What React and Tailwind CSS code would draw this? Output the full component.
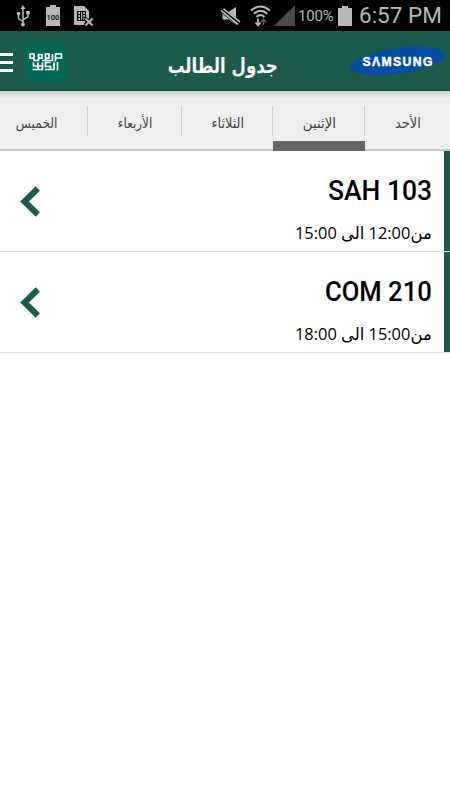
const days = [
  { label: 'الأحد', box: 'w-[85px]', text: 'scale-x-[0.93]' },
  { label: 'الإثنين', box: 'w-[92px]', text: 'scale-x-[0.95]', active: true },
  { label: 'الثلاثاء', box: 'w-[91px]', text: 'scale-x-[0.92]' },
  { label: 'الأربعاء', box: 'w-[94px]', text: 'scale-x-[0.86]' },
  { label: 'الخميس', box: 'w-[102px]', text: 'scale-x-[0.88]' },
]

const courses = [
  { code: 'SAH 103', from: '12:00', to: '15:00', fit: 'scale-x-[0.945]' },
  { code: 'COM 210', from: '15:00', to: '18:00', fit: 'scale-x-[0.915]' },
]

function StatusBar() {
  return (
    <div className="flex h-[31px] shrink-0 items-center bg-black text-[#b8b8b8]">
      <svg className="ml-[16px]" width="15" height="22" viewBox="0 0 15 22" fill="none" stroke="currentColor" strokeWidth="1.5">
        <path d="M7 3v16M2.5 9v4.5L7 16.5M12 8v3.5L7 15" />
        <path d="M7 0l2.6 4H4.4z" fill="currentColor" stroke="none" />
        <circle cx="7" cy="19.4" r="2" fill="currentColor" stroke="none" />
        <circle cx="2.5" cy="8.5" r="1.8" fill="currentColor" stroke="none" />
        <path d="M10.3 6h3.4v3.4h-3.4z" fill="currentColor" stroke="none" />
      </svg>
      <svg className="ml-[15px]" width="14" height="21" viewBox="0 0 14 21">
        <path d="M0 2h4V0h6v2h4v19H0z" fill="currentColor" />
        <text x="7" y="14.5" textAnchor="middle" fontSize="7.5" fontWeight="500" fill="#000" fontFamily="Roboto, sans-serif">100</text>
      </svg>
      <svg className="ml-[14px]" width="20" height="22" viewBox="0 0 20 22">
        <path d="M0 1h10l5 5v14H0z" fill="currentColor" />
        <path d="M3.5 6.5h8v9h-8zM3.5 9.5h3M3.5 12.5h3M11.5 9.5h-3M11.5 12.5h-3M6.5 6.5v9M8.7 6.5v9" fill="none" stroke="#000" strokeWidth="1.1" />
        <path d="M11 13.5l7 7M18 13.5l-7 7" stroke="#000" strokeWidth="4" />
        <path d="M11.5 13.5l7 7M18.5 13.5l-7 7" stroke="currentColor" strokeWidth="1.9" />
      </svg>
      {/* muted speaker: two slashes cut through the cone */}
      <svg className="ml-[127px]" width="20" height="20" viewBox="0 0 20 20">
        <path d="M1.5 6h6l7.500-5v17.500l-7.500-5h-6z" fill="currentColor" />
        <path d="M1 4l17 13.500" stroke="#000" strokeWidth="5" />
        <path d="M2.500 2.800l16.500 13M0 4.500l17 14" stroke="currentColor" strokeWidth="1.700" />
      </svg>
      <svg className="ml-[9px]" width="21" height="22" viewBox="0 0 21 22" fill="none" stroke="currentColor" strokeWidth="2">
        <path d="M1 5.5Q10.5 -2.5 20 5.5M3.800 8.800Q10.5 2.800 17.200 8.800M6.500 12Q10.5 8 14.500 12" />
        <path d="M8 13.500v6M5.500 17.500L8 20.500l2.500-3" strokeWidth="1.700" />
        <path d="M13.500 20v-5M11 17l2.500-3 2.500 3" stroke="#555" strokeWidth="1.700" />
      </svg>
      <svg className="ml-[3px]" width="21" height="21" viewBox="0 0 21 21">
        <path d="M21 0v21H0z" fill="#4b4b4b" />
      </svg>
      <span className="ml-[3px] w-[36px] whitespace-nowrap pt-px font-[Roboto,sans-serif] text-[15px] tracking-[-0.2px]">100%</span>
      <svg className="ml-[4px]" width="14" height="20" viewBox="0 0 14 20">
        <path d="M0 2h4V0h6v2h4v18H0z" fill="currentColor" />
      </svg>
      <span className="ml-[7px] whitespace-nowrap font-[Roboto,sans-serif] text-[22.500px]">6:57 PM</span>
    </div>
  )
}

function Emblem() {
  return (
    <svg className="ml-[12px]" width="40" height="40" viewBox="0 0 40 40">
      <path d="M0 0h40v40H0z" fill="#006854" />
      <path
        d="M9 16.200H5V12H9V18.500H13.500V12.500H17V16.200H13.500M17 18.500H24M20.500 18.500V12H24V16.200H20.500M24 18.500H27.500V12M30.500 19.500V12H36.500V16H30.500M8.500 20.500V24H13V27.500H7.500M13 20.500V24H17.500V20.500M17.500 24V27.500H13M25.500 20.500H20.500V24.500H25.500V27.500H20M25.500 27.500H29V20.500M32.500 20V28.500"
        fill="none"
        stroke="#fff"
        strokeWidth="1.700"
      />
    </svg>
  )
}

function SamsungLogo() {
  return (
    <svg width="94" height="32" viewBox="0 0 94 32">
      <ellipse cx="47" cy="16" rx="47.300" ry="12.700" fill="#034ea2" transform="rotate(-8 47 16)" />
      <text x="14" y="21.500" textLength="77.500" transform="scale(0.9 1)" fontSize="13.500" fontWeight="700" fill="#fff" stroke="#fff" strokeWidth="0.500" fontFamily="Liberation Sans, sans-serif">SΛMSUNG</text>
    </svg>
  )
}

function Header() {
  return (
    <header className="flex h-[60px] shrink-0 items-center border-b border-[#005044] bg-[#1e594e]">
      <div className="flex w-[13px] flex-col gap-[5px] pt-[3px]">
        <div className="h-[3px] bg-white" />
        <div className="h-[3px] bg-white" />
        <div className="h-[3px] bg-white" />
      </div>
      <div className="pt-[2px]">
        <Emblem />
      </div>
      <h1 className="ml-[103px] flex h-[44px] w-[110px] items-center justify-center whitespace-nowrap pt-[13px] font-['DejaVu_Sans',sans-serif] text-[21px] font-bold text-white">
        <span className="inline-block scale-x-[0.79]">جدول الطالب</span>
      </h1>
      <div className="ml-auto mr-[6px]">
        <SamsungLogo />
      </div>
    </header>
  )
}

function DayTabs() {
  return (
    <nav dir="rtl" className="flex h-[60px] shrink-0 overflow-hidden bg-gradient-to-b from-[#d0d0d0] from-0% to-[#eeeeee] to-12%">
      {days.map((day, i) => (
        <div key={day.label} className={`relative flex shrink-0 items-center justify-center border-b-2 border-[#cccccc] ${day.box}`}>
          {i > 0 && <div className="absolute right-0 top-[15px] h-[30px] w-px bg-[#cccccc]" />}
          <span className={`inline-block whitespace-nowrap pt-[7px] font-['DejaVu_Sans',sans-serif] text-[14px] text-[#444444] ${day.text}`}>
            {day.label}
          </span>
          {day.active && <div className="absolute inset-x-0 top-[50px] h-[10px] bg-[#666666]" />}
        </div>
      ))}
    </nav>
  )
}

function CourseRow({ course }) {
  return (
    <div className="flex h-[101px] flex-col">
      <div className="flex grow">
        <svg className="ml-[19px] mt-[34px]" width="22" height="33" viewBox="0 0 22 33">
          <path d="M18.800 3.500L5.500 16.500l13.300 13" fill="none" stroke="#1e594e" strokeWidth="6" />
        </svg>
        <div className="ml-auto mr-[12px] flex flex-col items-end">
          <div className={`mt-[23px] h-[34px] origin-right whitespace-nowrap font-[Roboto,sans-serif] text-[28px] font-medium leading-[34px] text-black ${course.fit}`}>
            {course.code}
          </div>
          <div dir="rtl" className="mt-[13px] h-[24px] origin-right scale-x-[0.965] whitespace-nowrap font-['Open_Sans','DejaVu_Sans',sans-serif] text-[17px] leading-[24px] text-black">
            من{course.from} الى {course.to}
          </div>
        </div>
        <div className="w-[6px] bg-[#1e594e]" />
      </div>
      <div className="h-px bg-[#dedede]" />
    </div>
  )
}

export default function App() {
  return (
    <div className="flex h-[800px] w-[450px] flex-col overflow-hidden bg-white">
      <StatusBar />
      <Header />
      <DayTabs />
      <main>
        {courses.map((course) => (
          <CourseRow key={course.code} course={course} />
        ))}
      </main>
    </div>
  )
}
